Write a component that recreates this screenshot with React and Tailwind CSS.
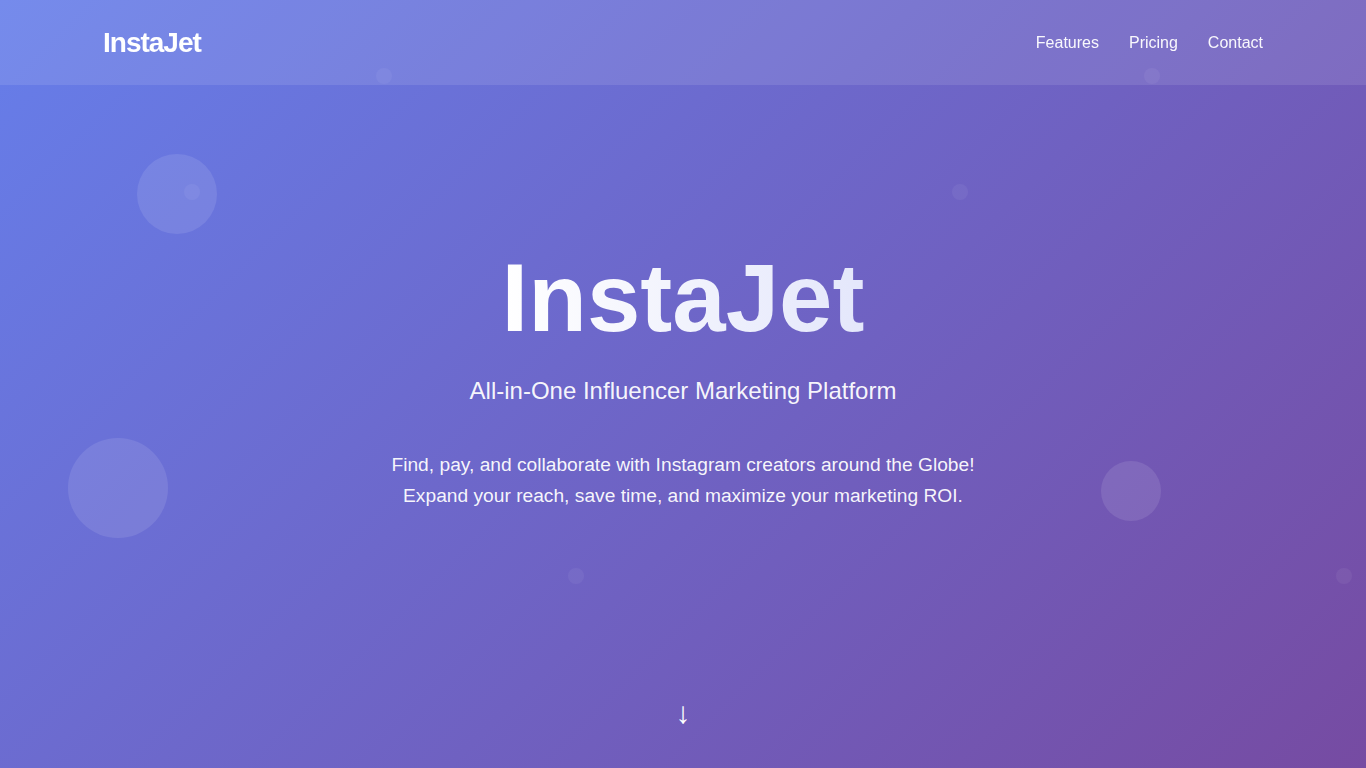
import React from 'react';

const bubbles = [
  { cls: 'left-[137px] top-[154px] w-[80px] h-[80px] bg-white/10' },
  { cls: 'left-[68px] top-[438px] w-[100px] h-[100px] bg-white/10' },
  { cls: 'left-[1101px] top-[461px] w-[60px] h-[60px] bg-white/10' },
];

const dots = [
  'left-[184px] top-[184px]',
  'left-[952px] top-[184px]',
  'left-[376px] top-[68px]',
  'left-[1144px] top-[68px]',
  'left-[568px] top-[568px]',
  'left-[1336px] top-[568px]',
];

const App = () => {
  return (
    <div
      className="relative min-h-screen overflow-hidden bg-[linear-gradient(135deg,#667eea_0%,#764ba2_100%)] text-white"
      style={{ fontFamily: '"Liberation Sans", Arial, sans-serif' }}
    >
      {/* deco */}
      {bubbles.map((b, i) => (
        <div key={i} className={`absolute rounded-full ${b.cls}`} />
      ))}
      {dots.map((d, i) => (
        <div key={i} className={`absolute w-4 h-4 rounded-full bg-white/[0.05] ${d}`} />
      ))}

      <header className="fixed top-0 left-0 right-0 z-10 h-[85px] bg-white/10">
        <div className="max-w-[1200px] mx-auto px-5 h-full flex items-center justify-between">
          <div className="text-[28px] font-bold tracking-[-1px] text-white">InstaJet</div>
          <nav className="flex items-center gap-[30px] text-base text-white/95">
            <a href="#features">Features</a>
            <a href="#pricing">Pricing</a>
            <a href="#contact">Contact</a>
          </nav>
        </div>
      </header>

      <main className="relative h-screen flex flex-col items-center justify-center pb-[12px] text-center">
        <h1 className="text-[96px] leading-[1.1] font-bold mb-[23px] bg-[linear-gradient(90deg,#ffffff,#e4e7fb)] bg-clip-text text-transparent">
          InstaJet
        </h1>
        <p className="text-2xl leading-[1.5] text-white/95 mb-[40px]">
          All-in-One Influencer Marketing Platform
        </p>
        <p className="text-[19.2px] leading-[31px] text-white/95">
          Find, pay, and collaborate with Instagram creators around the Globe!
          <br />
          Expand your reach, save time, and maximize your marketing ROI.
        </p>

        <div className="absolute bottom-[40px] left-1/2 -translate-x-1/2 text-[30px] leading-none text-white">
          ↓
        </div>
      </main>
    </div>
  );
};

export default App;
